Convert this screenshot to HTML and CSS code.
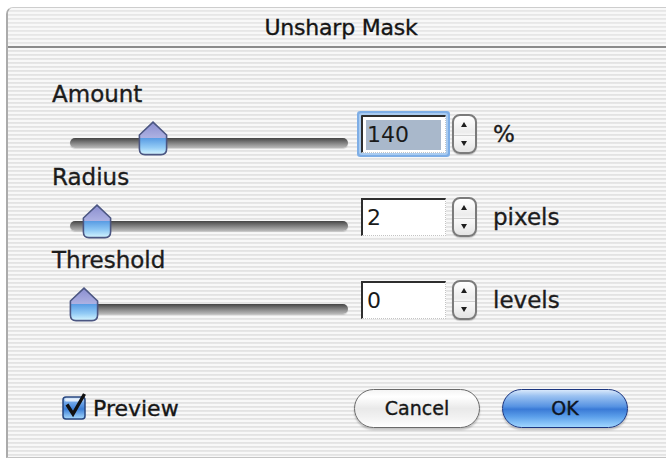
FILE: index.html
```html
<!DOCTYPE html>
<html lang="en">
<head>
<meta charset="utf-8">
<title>Unsharp Mask</title>
<link rel="stylesheet" href="styles.css">
</head>
<body>
<svg class="defs" width="0" height="0" aria-hidden="true">
  <defs>
    <linearGradient id="thumbFill" x1="0" y1="0" x2="0" y2="1">
      <stop offset="0" stop-color="#8a8ecf"/>
      <stop offset="0.48" stop-color="#adb1e2"/>
      <stop offset="0.5" stop-color="#5a9de4"/>
      <stop offset="0.78" stop-color="#93cbf5"/>
      <stop offset="1" stop-color="#d6f6ff"/>
    </linearGradient>
    <linearGradient id="checkFill" x1="0" y1="0" x2="0" y2="1">
      <stop offset="0" stop-color="#d6e8fb"/>
      <stop offset="0.25" stop-color="#6fa6e8"/>
      <stop offset="0.55" stop-color="#3d7fd6"/>
      <stop offset="1" stop-color="#a9dcff"/>
    </linearGradient>
  </defs>
</svg>

<div class="window">
  <div class="titlebar">Unsharp Mask</div>

  <div class="content">
    <section class="param">
      <div class="label">Amount</div>
      <div class="controls">
        <div class="slider">
          <div class="track"></div>
          <svg class="thumb" style="left:68px" viewBox="0 0 30 35" width="30" height="35"><path d="M15 1.2 L28.6 14 L28.6 28 Q28.6 33.6 23 33.6 L7 33.6 Q1.4 33.6 1.4 28 L1.4 14 Z" fill="url(#thumbFill)" stroke="#4b5682" stroke-width="1.6"/></svg>
        </div>
        <div class="field focused"><span class="value selected">140</span></div>
        <div class="stepper"></div>
        <div class="unit">%</div>
      </div>
    </section>

    <section class="param">
      <div class="label">Radius</div>
      <div class="controls">
        <div class="slider">
          <div class="track"></div>
          <svg class="thumb" style="left:12px" viewBox="0 0 30 35" width="30" height="35"><path d="M15 1.2 L28.6 14 L28.6 28 Q28.6 33.6 23 33.6 L7 33.6 Q1.4 33.6 1.4 28 L1.4 14 Z" fill="url(#thumbFill)" stroke="#4b5682" stroke-width="1.6"/></svg>
        </div>
        <div class="field"><span class="value">2</span></div>
        <div class="stepper"></div>
        <div class="unit">pixels</div>
      </div>
    </section>

    <section class="param">
      <div class="label">Threshold</div>
      <div class="controls">
        <div class="slider">
          <div class="track"></div>
          <svg class="thumb" style="left:-1px" viewBox="0 0 30 35" width="30" height="35"><path d="M15 1.2 L28.6 14 L28.6 28 Q28.6 33.6 23 33.6 L7 33.6 Q1.4 33.6 1.4 28 L1.4 14 Z" fill="url(#thumbFill)" stroke="#4b5682" stroke-width="1.6"/></svg>
        </div>
        <div class="field"><span class="value">0</span></div>
        <div class="stepper"></div>
        <div class="unit">levels</div>
      </div>
    </section>

    <div class="footer">
      <label class="check">
        <svg class="checkbox" viewBox="0 0 26 28" width="26" height="28">
          <rect x="1" y="5" width="22" height="22" rx="3" fill="url(#checkFill)" stroke="#27467f" stroke-width="1.5"/>
          <rect x="3" y="6.5" width="18" height="3" rx="1.5" fill="#ffffff" opacity="0.7"/>
          <path d="M5 12.5 L11 22 L22.5 2" fill="none" stroke="#111" stroke-width="3.4" stroke-linejoin="miter"/>
        </svg>
        <span>Preview</span>
      </label>
      <div class="buttons">
        <button class="btn cancel">Cancel</button>
        <button class="btn ok">OK</button>
      </div>
    </div>
  </div>
</div>
</body>
</html>
```

FILE: styles.css
```css
html, body {
  margin: 0;
  padding: 0;
  background: #ffffff;
  overflow: hidden;
  width: 666px;
  height: 460px;
}

.defs {
  position: absolute;
  width: 0;
  height: 0;
}

.window {
  margin: 7px 0 0 6px;
  width: 690px;
  height: 449px;
  border-left: 2px solid #ababab;
  border-top: 1px solid #cdcdcd;
  border-bottom: 1px solid #c4c4c4;
  border-top-left-radius: 7px;
  overflow: hidden;
  font-family: "DejaVu Sans", "Liberation Sans", sans-serif;
  color: #1c1c1c;
  -webkit-text-stroke: 0.35px currentColor;
  background: repeating-linear-gradient(to bottom,
    #f8f8f8 0px, #f8f8f8 1.5px, #e3e3e3 2.2px, #e3e3e3 3.4px, #f8f8f8 4px);
}

.titlebar {
  height: 38px;
  border-bottom: 2px solid #8c8c8c;
  box-sizing: content-box;
  display: flex;
  align-items: center;
  justify-content: center;
  padding-right: 24px;
  font-size: 22px;
  letter-spacing: -0.2px;
  color: #151515;
  background: repeating-linear-gradient(to bottom,
    #f8f8f8 0px, #f8f8f8 1.6px, #e7e7e7 2.3px, #e7e7e7 3.4px, #f8f8f8 4px);
}

.content {
  padding-top: 33px;
}

.param {
  height: 83px;
}

.label {
  height: 26px;
  line-height: 26px;
  font-size: 23px;
  padding-left: 44px;
  margin-bottom: 8px;
}

.controls {
  display: flex;
  align-items: center;
  height: 38px;
  padding-left: 62px;
}

.slider {
  position: relative;
  width: 278px;
  height: 38px;
  flex: none;
}

.track {
  position: absolute;
  left: 0;
  right: 0;
  top: 23px;
  height: 10px;
  border-radius: 5px;
  background: linear-gradient(to bottom, #444444 0%, #6a6a6a 30%, #989898 70%, #b9b9b9 100%);
  box-shadow: 0 1px 1px rgba(0, 0, 0, 0.15);
}

.thumb {
  position: absolute;
  top: 6px;
  display: block;
}

.field {
  flex: none;
  margin-left: 13px;
  width: 85px;
  height: 38px;
  box-sizing: border-box;
  background: #ffffff;
  border-top: 2px solid #2e2e2e;
  border-left: 2px solid #2e2e2e;
  border-right: 1px dotted #c4c4c4;
  border-bottom: 1px dotted #c4c4c4;
  padding: 3px 4px 2px 3px;
  display: flex;
  font-size: 22px;
  color: #1a1a1a;
  -webkit-text-stroke: 0;
}

.field.focused {
  box-shadow: 0 0 0 2px #a9cbf0, 0 0 0 4px #7eaee6;
  border-radius: 1px;
}

.value {
  flex: 1;
  line-height: 30px;
  padding-left: 1px;
}

.value.selected {
  background: #a9b8cb;
}

.stepper {
  flex: none;
  position: relative;
  margin-left: 6px;
  width: 25px;
  height: 40px;
  box-sizing: border-box;
  border: 2px solid #7b7b7b;
  border-radius: 8px;
  background:
    linear-gradient(to bottom, transparent 19px, #cfcfcf 19px, #cfcfcf 20px, transparent 20px),
    linear-gradient(to bottom, #ffffff, #ececec 45%, #fafafa 55%, #e4e4e4);
  box-shadow: 0 1px 1px rgba(0, 0, 0, 0.2);
}

.stepper::before,
.stepper::after {
  content: "";
  position: absolute;
  left: 7px;
  width: 0;
  height: 0;
  border-left: 3.5px solid transparent;
  border-right: 3.5px solid transparent;
}

.stepper::before {
  top: 6px;
  border-bottom: 5px solid #1e1e1e;
}

.stepper::after {
  top: 25px;
  border-top: 5px solid #1e1e1e;
}

.unit {
  margin-left: 16px;
  font-size: 23px;
  line-height: 26px;
}

.footer {
  width: 620px;
  box-sizing: border-box;
  margin-top: 58px;
  padding-left: 54px;
  height: 40px;
  display: flex;
  align-items: center;
}

.check {
  display: flex;
  align-items: center;
  font-size: 22px;
  color: #161616;
}

.checkbox {
  display: block;
  margin-top: -4px;
  margin-right: 5px;
}

.buttons {
  margin-left: auto;
  display: flex;
  gap: 22px;
}

.btn {
  width: 126px;
  height: 39px;
  border-radius: 20px;
  font-family: "DejaVu Sans", "Liberation Sans", sans-serif;
  font-size: 19px;
  color: #161616;
  -webkit-text-stroke: 0.35px currentColor;
  padding: 0;
  box-shadow: 0 2px 2px rgba(0, 0, 0, 0.22);
}

.cancel {
  border: 1.5px solid #6a6a6a;
  background: linear-gradient(to bottom, #f4f4f4 0%, #ffffff 18%, #e9e9e9 50%, #f2f2f2 75%, #ffffff 100%);
}

.ok {
  border: 1.5px solid #1c3680;
  background: linear-gradient(to bottom, #d8e8fb 0%, #9cc2f1 16%, #5592e2 45%, #3a7ad6 52%, #5b9fea 72%, #9fd6ff 100%);
  color: #0e1420;
}
```
